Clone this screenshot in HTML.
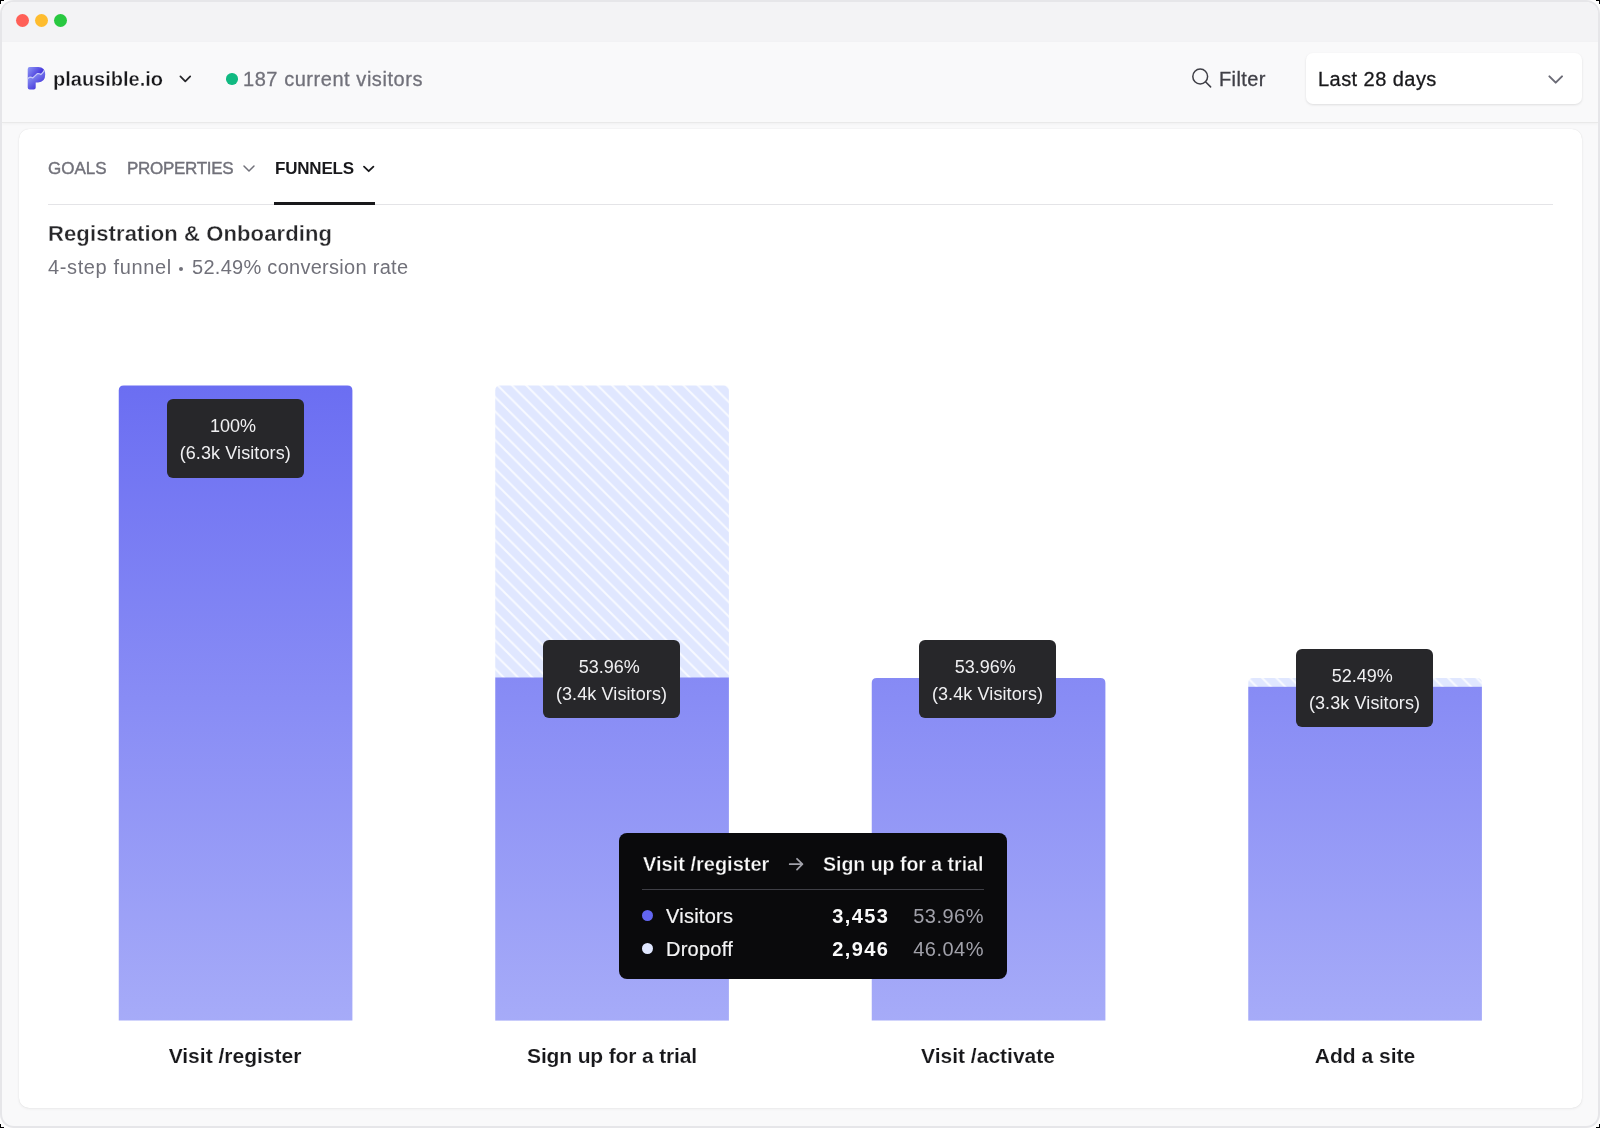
<!DOCTYPE html>
<html><head><meta charset="utf-8">
<style>
*{box-sizing:border-box;margin:0;padding:0}
html,body{width:1600px;height:1128px;overflow:hidden;background:#fdfdfd}
body{font-family:"Liberation Sans",sans-serif;position:relative}
.abs{position:absolute}
#win{position:absolute;left:0;top:0;width:1600px;height:1128px;border:2px solid #e6e6e9;border-radius:14px;background:#f9f9fa;overflow:hidden}
#titlebar{position:absolute;left:0;top:0;width:1596px;height:40px;background:#f3f3f5}
.dot{position:absolute;width:13px;height:13px;border-radius:50%}
#header{position:absolute;left:0;top:40px;width:1596px;height:81px;background:#f9f9fa;border-bottom:1px solid #e9e9e9;box-shadow:0 1px 3px rgba(0,0,0,.04)}
.t{position:absolute;white-space:nowrap;line-height:1;will-change:transform}
#card{position:absolute;left:19px;top:128.5px;width:1563px;height:979.5px;background:#fff;border-radius:10px;box-shadow:0 0 1px rgba(0,0,0,.12),0 1px 3px rgba(0,0,0,.06)}
.lbl{position:absolute;background:#27272a;border-radius:6px;color:#f0f0f2;font-size:18px;text-align:center;will-change:transform}
</style></head>
<body>
<div id="win">
  <div id="titlebar">
    <div class="dot" style="left:13.5px;top:11.5px;background:#ff5f57"></div>
    <div class="dot" style="left:33px;top:11.5px;background:#febc2e"></div>
    <div class="dot" style="left:52px;top:11.5px;background:#28c840"></div>
  </div>
  <div id="header"></div>
</div>

<!-- header content (page coordinates) -->
<svg class="abs" style="left:24px;top:64px" width="24" height="28" viewBox="0 0 24 28">
  <defs>
    <linearGradient id="lg1" gradientUnits="userSpaceOnUse" x1="4" y1="3" x2="15" y2="12"><stop offset="0" stop-color="#8f99f6"/><stop offset="1" stop-color="#4332da"/></linearGradient>
    <linearGradient id="lg2" gradientUnits="userSpaceOnUse" x1="5" y1="12" x2="15" y2="25"><stop offset="0" stop-color="#8d96f5"/><stop offset="1" stop-color="#3f2ed8"/></linearGradient>
    <clipPath id="ctop"><path d="M0,0 L24,0 L24,4 L20.1,6.7 L19.1,8.2 Q18,9.6 16.9,10.4 Q15.9,9.7 14.9,9.7 Q14,9.4 13.2,9.7 L10.4,12.4 Q9.5,13.4 8.7,13.9 Q7.4,13.3 6.2,13.2 Q5,13.4 3.7,14.6 L0,16 Z"/></clipPath>
    <clipPath id="cbot"><path d="M0,28 L24,28 L24,4 L20.1,6.7 L19.1,8.2 Q18,9.6 16.9,10.4 Q15.9,9.7 14.9,9.7 Q14,9.4 13.2,9.7 L10.4,12.4 Q9.5,13.4 8.7,13.9 Q7.4,13.3 6.2,13.2 Q5,13.4 3.7,14.6 L0,16 Z"/></clipPath>
  </defs>
  <path clip-path="url(#ctop)" fill="url(#lg1)" d="M3.7,5 Q3.7,3 5.7,3 L14.3,3 Q21.2,3 21.2,10.6 Q21.2,18.4 14,18.4 L11.7,18.4 L11.7,23.6 Q11.7,25.6 9.7,25.6 L5.7,25.6 Q3.7,25.6 3.7,23.6 Z"/>
  <path clip-path="url(#cbot)" fill="url(#lg2)" d="M3.7,5 Q3.7,3 5.7,3 L14.3,3 Q21.2,3 21.2,10.6 Q21.2,18.4 14,18.4 L11.7,18.4 L11.7,23.6 Q11.7,25.6 9.7,25.6 L5.7,25.6 Q3.7,25.6 3.7,23.6 Z"/>
  <clipPath id="cP"><path d="M3.7,5 Q3.7,3 5.7,3 L14.3,3 Q21.2,3 21.2,10.6 Q21.2,18.4 14,18.4 L11.7,18.4 L11.7,23.6 Q11.7,25.6 9.7,25.6 L5.7,25.6 Q3.7,25.6 3.7,23.6 Z"/></clipPath>
  <path clip-path="url(#cP)" d="M3.2,15 Q5,13.4 6.2,13.2 Q7.4,13.3 8.7,13.9 Q9.5,13.4 10.4,12.4 L13.2,9.7 Q14,9.4 14.9,9.7 Q15.9,9.7 16.9,10.4 Q18,9.6 19.1,8.2 L20.1,6.7 L22,4" fill="none" stroke="#c4c7f7" stroke-width="1.25"/>
</svg>
<div class="t" style="left:53.3px;top:69.3px;font-size:20px;font-weight:bold;color:#18181b;-webkit-text-stroke:0.3px #f9f9fa">plausible.io</div>
<svg class="abs" style="left:178px;top:73px" width="14" height="12" viewBox="0 0 14 12"><path d="M2.4,3.4 L7.3,8.3 L12.2,3.4" fill="none" stroke="#27272a" stroke-width="1.75" stroke-linecap="round" stroke-linejoin="round"/></svg>
<div class="abs" style="left:226px;top:73px;width:11.5px;height:11.5px;border-radius:50%;background:#10b981"></div>
<div class="t" style="left:243.3px;top:69px;font-size:20px;color:#71717a;letter-spacing:0.55px;-webkit-text-stroke:0.3px #71717a">187 current visitors</div>

<svg class="abs" style="left:1188px;top:64px" width="28" height="28" viewBox="0 0 28 28"><circle cx="12.2" cy="12.5" r="7.4" fill="none" stroke="#3f3f46" stroke-width="1.5"/><path d="M17.5,17.8 L22.6,22.9" stroke="#3f3f46" stroke-width="1.55" stroke-linecap="round"/></svg>
<div class="t" style="left:1219px;top:68.7px;font-size:20px;color:#3f3f46;letter-spacing:0.4px;-webkit-text-stroke:0.3px #3f3f46">Filter</div>

<div class="abs" style="left:1306px;top:52.7px;width:275.7px;height:51px;background:#fff;border-radius:7px;box-shadow:0 1px 3px rgba(0,0,0,.08),0 1px 2px rgba(0,0,0,.04)"></div>
<div class="t" style="left:1318px;top:68.8px;font-size:20px;color:#18181b;letter-spacing:0.45px;-webkit-text-stroke:0.3px #18181b">Last 28 days</div>
<svg class="abs" style="left:1545px;top:70px" width="22" height="18" viewBox="0 0 22 18"><path d="M4.4,6.4 L10.7,12.6 L17,6.4" fill="none" stroke="#6b6b76" stroke-width="2" stroke-linecap="round" stroke-linejoin="round"/></svg>

<div id="card"></div>

<!-- tabs -->
<div class="t" style="left:48.3px;top:160px;font-size:17px;color:#71717a;letter-spacing:0px;-webkit-text-stroke:0.4px #71717a">GOALS</div>
<div class="t" style="left:127px;top:160px;font-size:17px;color:#71717a;letter-spacing:-0.3px;-webkit-text-stroke:0.4px #71717a">PROPERTIES</div>
<svg class="abs" style="left:241px;top:161px" width="16" height="14" viewBox="0 0 16 14"><path d="M3,5 L8,10 L13,5" fill="none" stroke="#71717a" stroke-width="1.5" stroke-linecap="round" stroke-linejoin="round"/></svg>
<div class="t" style="left:274.7px;top:160.1px;font-size:17px;font-weight:bold;color:#18181b;letter-spacing:-0.2px">FUNNELS</div>
<svg class="abs" style="left:361px;top:161px" width="16" height="14" viewBox="0 0 16 14"><path d="M3,5.7 L7.7,10.2 L12.4,5.7" fill="none" stroke="#18181b" stroke-width="1.8" stroke-linecap="round" stroke-linejoin="round"/></svg>
<div class="abs" style="left:48px;top:204px;width:1505px;height:1px;background:#e4e4e7"></div>
<div class="abs" style="left:274px;top:202px;width:101px;height:3px;background:#18181b"></div>

<div class="t" style="left:48px;top:222.8px;font-size:22px;font-weight:bold;color:#27272a;letter-spacing:0.12px;-webkit-text-stroke:0.3px #fff">Registration &amp; Onboarding</div>
<div class="t" style="left:48px;top:257px;font-size:20px;color:#71717a;letter-spacing:0.62px">4-step funnel</div><div class="abs" style="left:179px;top:267px;width:4px;height:4px;border-radius:50%;background:#71717a"></div><div class="t" style="left:191.5px;top:257px;font-size:20px;color:#71717a;letter-spacing:0.28px">52.49% conversion rate</div>

<!-- chart -->
<svg class="abs" style="left:0;top:0" width="1600" height="1128">
  <defs>
    <linearGradient id="bg" gradientUnits="userSpaceOnUse" x1="0" y1="385.5" x2="0" y2="1020.5">
      <stop offset="0" stop-color="#6b6ef2"/><stop offset="1" stop-color="#a6abf8"/>
    </linearGradient>
    <pattern id="hatch" patternUnits="userSpaceOnUse" x="12.2" y="0" width="14.3" height="14.3">
      <rect width="14.3" height="14.3" fill="#e0e7ff"/>
      <path d="M-2,-2 L16.3,16.3 M-16.3,-2 L2,16.3 M12.3,-2 L30.6,16.3" stroke="#f8faff" stroke-width="2"/>
    </pattern>
    <clipPath id="c1"><path d="M118.5,1020.6 L118.5,390.5 Q118.5,385.5 123.5,385.5 L347,385.5 Q352,385.5 352,390.5 L352,1020.6 Z"/></clipPath>
  </defs>
  <path fill="url(#bg)" d="M118.75,1020.6 L118.75,390.5 Q118.75,385.5 123.75,385.5 L347.40,385.5 Q352.40,385.5 352.40,390.5 L352.40,1020.6 Z"/>
  <path fill="url(#hatch)" d="M495.25,678 L495.25,390.5 Q495.25,385.5 500.25,385.5 L723.90,385.5 Q728.90,385.5 728.90,390.5 L728.90,678 Z"/>
  <rect fill="url(#bg)" x="495.25" y="677.5" width="233.65" height="343.1"/>
  <path fill="url(#bg)" d="M871.75,1020.6 L871.75,683 Q871.75,678 876.75,678 L1100.40,678 Q1105.40,678 1105.40,683 L1105.40,1020.6 Z"/>
  <path fill="url(#hatch)" d="M1248.25,687 L1248.25,683 Q1248.25,678 1253.25,678 L1476.90,678 Q1481.90,678 1481.90,683 L1481.90,687 Z"/>
  <rect fill="url(#bg)" x="1248.25" y="686.8" width="233.65" height="333.8"/>
</svg>

<div class="lbl" style="left:167px;top:399px;width:136.5px;height:78.5px"><div style="position:absolute;left:0;right:4.5px;top:17.7px;line-height:1">100%</div><div style="position:absolute;left:0;right:0;top:44.6px;line-height:1;letter-spacing:0.1px">(6.3k Visitors)</div></div>
<div class="lbl" style="left:543px;top:640px;width:137px;height:78px"><div style="position:absolute;left:0;right:4.5px;top:17.7px;line-height:1">53.96%</div><div style="position:absolute;left:0;right:0;top:44.6px;line-height:1;letter-spacing:0.1px">(3.4k Visitors)</div></div>
<div class="lbl" style="left:919px;top:640px;width:137px;height:78px"><div style="position:absolute;left:0;right:4.5px;top:17.7px;line-height:1">53.96%</div><div style="position:absolute;left:0;right:0;top:44.6px;line-height:1;letter-spacing:0.1px">(3.4k Visitors)</div></div>
<div class="lbl" style="left:1296px;top:649px;width:137px;height:78px"><div style="position:absolute;left:0;right:4.5px;top:17.7px;line-height:1">52.49%</div><div style="position:absolute;left:0;right:0;top:44.6px;line-height:1;letter-spacing:0.1px">(3.3k Visitors)</div></div>

<div class="t" style="left:85px;width:300px;text-align:center;top:1044.6px;font-size:21px;font-weight:bold;color:#18181b;-webkit-text-stroke:0.12px #fff">Visit /register</div>
<div class="t" style="left:462px;width:300px;text-align:center;top:1044.6px;font-size:21px;letter-spacing:-0.15px;font-weight:bold;color:#18181b;-webkit-text-stroke:0.12px #fff">Sign up for a trial</div>
<div class="t" style="left:838px;width:300px;text-align:center;top:1044.6px;font-size:21px;font-weight:bold;color:#18181b;-webkit-text-stroke:0.12px #fff">Visit /activate</div>
<div class="t" style="left:1215px;width:300px;text-align:center;top:1044.6px;font-size:21px;font-weight:bold;color:#18181b;-webkit-text-stroke:0.12px #fff">Add a site</div>

<!-- tooltip -->
<div class="abs" style="left:619px;top:833px;width:387.5px;height:146px;background:#0a0a0c;border-radius:8px"></div>
<div class="t" style="left:642.6px;top:854.3px;font-size:20px;font-weight:bold;color:#fafafa;-webkit-text-stroke:0.3px #0a0a0c">Visit /register</div>
<svg class="abs" style="left:786px;top:856px" width="20" height="18" viewBox="0 0 20 18"><path d="M3.7,8.2 L16.4,8.2 M11,2.8 L16.4,8.2 L11,13.6" fill="none" stroke="#a1a1aa" stroke-width="1.75" stroke-linecap="round" stroke-linejoin="round"/></svg>
<div class="t" style="left:823px;top:854.6px;font-size:19.5px;font-weight:bold;color:#fafafa;-webkit-text-stroke:0.3px #0a0a0c">Sign up for a trial</div>
<div class="abs" style="left:642px;top:889px;width:342px;height:1px;background:#3f3f46"></div>
<div class="abs" style="left:642px;top:910px;width:11px;height:11px;border-radius:50%;background:#6366f1"></div>
<div class="t" style="left:665.6px;top:905.8px;letter-spacing:0.25px;font-size:20px;color:#f4f4f5;-webkit-text-stroke:0.2px #f4f4f5">Visitors</div>
<div class="t" style="left:780px;width:109.4px;text-align:right;top:905.8px;font-size:20px;font-weight:bold;letter-spacing:1.4px;color:#fafafa">3,453</div>
<div class="t" style="left:880px;width:104px;text-align:right;top:905.8px;font-size:20px;letter-spacing:0.5px;color:#a1a1aa">53.96%</div>
<div class="abs" style="left:642px;top:943px;width:11px;height:11px;border-radius:50%;background:#e0e7ff"></div>
<div class="t" style="left:665.6px;top:938.8px;letter-spacing:0.25px;font-size:20px;color:#f4f4f5;-webkit-text-stroke:0.2px #f4f4f5">Dropoff</div>
<div class="t" style="left:780px;width:109.4px;text-align:right;top:938.8px;font-size:20px;font-weight:bold;letter-spacing:1.4px;color:#fafafa">2,946</div>
<div class="t" style="left:880px;width:104px;text-align:right;top:938.8px;font-size:20px;letter-spacing:0.5px;color:#a1a1aa">46.04%</div>
<div class="abs" style="left:0;top:0;width:4px;height:1px;background:#000"></div><div class="abs" style="left:0;top:0;width:1px;height:4px;background:#000"></div>
<div class="abs" style="right:0;top:0;width:4px;height:1px;background:#000"></div><div class="abs" style="right:0;top:0;width:1px;height:4px;background:#000"></div>
<div class="abs" style="left:0;bottom:0;width:4px;height:1px;background:#000"></div><div class="abs" style="left:0;bottom:0;width:1px;height:4px;background:#000"></div>
<div class="abs" style="right:0;bottom:0;width:4px;height:1px;background:#000"></div><div class="abs" style="right:0;bottom:0;width:1px;height:4px;background:#000"></div>
</body></html>
